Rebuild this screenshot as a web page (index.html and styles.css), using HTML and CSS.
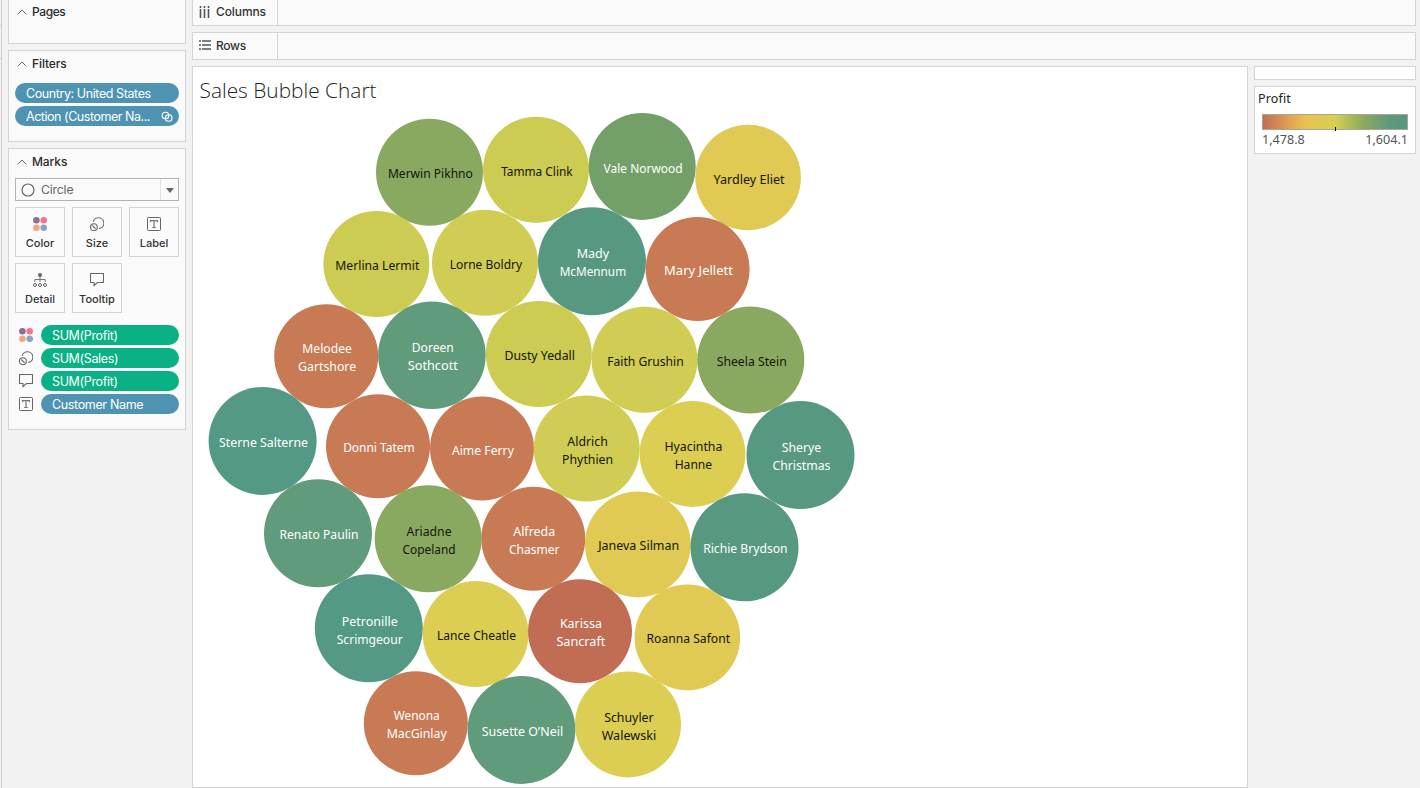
FILE: index.html
```html
<!DOCTYPE html>
<html lang="en">
<head>
<meta charset="utf-8">
<title>Sales Bubble Chart</title>
<link rel="stylesheet" href="styles.css">
</head>
<body>
<svg class="defs" width="0" height="0" aria-hidden="true">
  <symbol id="chev" viewBox="0 0 10 6"><path d="M.8 5.200 5 1l4.200 4.200" fill="none" stroke="#666" stroke-width="1"/></symbol>
  <symbol id="color" viewBox="0 0 14 14"><circle cx="3.400" cy="3.300" r="3.300" fill="#86729a"/><circle cx="10.800" cy="3.300" r="3.300" fill="#fb7185"/><circle cx="3.400" cy="10.700" r="3.300" fill="#f0a880"/><circle cx="10.800" cy="10.700" r="3.300" fill="#82a5ca"/></symbol>
  <symbol id="size" viewBox="0 0 14 14"><path d="M3.200 4.900A5.400 5.400 0 1 1 9 11.500" fill="none" stroke="#666" stroke-width="1.100"/><circle cx="3.900" cy="10.200" r="3.400" fill="none" stroke="#666" stroke-width="1.100"/><path d="m2.300 8.500 3.300 3.300" stroke="#666" stroke-width="1.100"/></symbol>
  <symbol id="label" viewBox="0 0 14 14"><rect x=".5" y=".5" width="13" height="13" rx=".8" fill="none" stroke="#666"/><path d="M3.500 5.300V3.600h7v1.700M7 3.600v7M5.200 10.500h3.600" fill="none" stroke="#777" stroke-width="1.200"/></symbol>
  <symbol id="tip" viewBox="0 0 14 14"><path d="M.5.500h13v9H7.500L4 12.500v-3H.5z" fill="none" stroke="#666" stroke-width="1.100"/></symbol>
  <symbol id="detail" viewBox="0 0 14 14"><circle cx="7" cy="2" r="2" fill="#666"/><path d="M7 3v6M1.800 9V6.500h10.400V9" fill="none" stroke="#777"/><g fill="#fafafa" stroke="#666"><circle cx="2" cy="12" r="1.500"/><circle cx="7" cy="12" r="1.500"/><circle cx="12" cy="12" r="1.500"/></g></symbol>
</svg>
<div class="workspace">
  <div class="gutter"><i></i><i></i></div>
  <aside class="sidebar">
    <section class="card pages"><h2><svg class="chev"><use href="#chev"/></svg><span>Pages</span></h2></section>
    <section class="card filters">
      <h2><svg class="chev"><use href="#chev"/></svg><span>Filters</span></h2>
      <div class="pills">
        <div class="pill blue"><span class="t-country">Country: United States</span></div>
        <div class="pill blue"><span class="t-action">Action (Customer Na...</span>
          <svg class="link" viewBox="0 0 12 12"><g fill="none" stroke="#fff" stroke-width="1.100"><circle cx="4.500" cy="4.500" r="3.300"/><circle cx="7.700" cy="7" r="3.300"/></g></svg></div>
      </div>
    </section>
    <section class="card marks">
      <h2><svg class="chev"><use href="#chev"/></svg><span>Marks</span></h2>
      <div class="select"><svg class="ring" viewBox="0 0 13 13"><circle cx="6.500" cy="6.500" r="5.600" fill="none" stroke="#666" stroke-width="1.100"/></svg><span>Circle</span><div class="arrow"><svg width="8" height="5" viewBox="0 0 8 5"><path d="M0 0h8L4 5z" fill="#666"/></svg></div></div>
      <div class="buttons">
        <div class="btn"><svg class="ico"><use href="#color"/></svg><span>Color</span></div>
        <div class="btn"><svg class="ico"><use href="#size"/></svg><span>Size</span></div>
        <div class="btn"><svg class="ico"><use href="#label"/></svg><span>Label</span></div>
        <div class="btn"><svg class="ico"><use href="#detail"/></svg><span>Detail</span></div>
        <div class="btn"><svg class="ico"><use href="#tip"/></svg><span>Tooltip</span></div>
      </div>
      <div class="fields">
        <div class="field"><svg class="ico"><use href="#color"/></svg><div class="pill green"><span>SUM(Profit)</span></div></div>
        <div class="field"><svg class="ico"><use href="#size"/></svg><div class="pill green"><span>SUM(Sales)</span></div></div>
        <div class="field"><svg class="ico"><use href="#tip"/></svg><div class="pill green"><span>SUM(Profit)</span></div></div>
        <div class="field"><svg class="ico"><use href="#label"/></svg><div class="pill blue"><span class="t-customer">Customer Name</span></div></div>
      </div>
    </section>
  </aside>
  <main class="main">
    <div class="shelf columns"><div class="shelf-name"><svg width="12" height="12" viewBox="0 0 12 12"><path d="M1.500 0v2M5.500 0v2M9.500 0v2M1.500 3v9M5.500 3v9M9.500 3v9" stroke="#555" stroke-width="1.600"/></svg><span>Columns</span></div></div>
    <div class="shelf rows"><div class="shelf-name"><svg width="12" height="12" viewBox="0 0 12 12"><path d="M0 2h2M0 6h2M0 10h2M3 2h9M3 6h9M3 10h9" stroke="#555" stroke-width="1.700"/></svg><span>Rows</span></div></div>
    <div class="view">
      <section class="sheet"><svg class="chart" id="chart" width="1054" height="720" viewBox="193 67 1054 720"><text class="title" x="199.500" y="98" textLength="177" lengthAdjust="spacingAndGlyphs">Sales Bubble Chart</text></svg></section>
      <aside class="legends">
        <div class="legend-empty"></div>
        <div class="legend">
          <h3>Profit</h3>
          <div class="ramp"><i></i></div>
          <div class="range"><span>1,478.8</span><span>1,604.1</span></div>
        </div>
      </aside>
    </div>
  </main>
</div>
<script src="chart.js"></script>
</body>
</html>
```
FILE: styles.css
```css
* { box-sizing: border-box; }
body { margin: 0; width: 1420px; height: 788px; overflow: hidden; background: #f2f2f2; font-family: Inter, "Liberation Sans", sans-serif; color: #333; }
.defs { display: block; height: 0; }
svg { flex: none; }
.workspace { display: flex; height: 788px; }
.gutter { width: 2px; border-right: 1px solid #d0d0d0; padding-top: 25px; display: flex; flex-direction: column; gap: 32px; }
.gutter i { height: 1px; background: #d0d0d0; }
.sidebar { width: 178px; margin-left: 6px; display: flex; flex-direction: column; gap: 6px; }
.card { background: #fafafa; border: 1px solid #d4d4d4; padding: 0 6px; }
.card h2 { margin: 0; height: 26px; display: flex; align-items: center; gap: 5px; padding: 0 0 2px 2px; font-size: 12px; letter-spacing: -.1px; font-weight: 500; color: #2b2b2b; }
.chev { width: 10px; height: 6px; margin-top: 1px; }
.card.pages { height: 44px; border-top: 0; }
.pages h2 { height: 24px; letter-spacing: -.4px; }
.filters { height: 92px; }
.marks { height: 282px; }
.pills { display: flex; flex-direction: column; gap: 3px; padding-top: 6px; }
.pill { height: 20px; border-radius: 10px; padding: 1px 6px 0 11px; display: flex; align-items: center; justify-content: space-between; color: #fff; font-size: 12.500px; letter-spacing: -.35px; white-space: nowrap; flex: 1; }
.pills .pill { flex: none; }
.blue { background: #4e94b2; }
.green { background: #09b184; }
.t-country, .t-action { letter-spacing: -.41px; }
.t-action { letter-spacing: -.46px; }
.link { width: 12px; height: 12px; }
.select { height: 23px; margin-top: 3px; border: 1px solid #b2b2b2; display: flex; align-items: center; padding-left: 5px; font-size: 12.300px; letter-spacing: -.2px; color: #666; background: #fafafa; }
.ring { width: 14px; height: 14px; margin-right: 6px; }
.arrow { margin-left: auto; width: 18px; height: 21px; border-left: 1px solid #e0e0e0; display: flex; align-items: center; justify-content: center; padding: 2px 0 0 1px; }
.buttons { display: grid; grid-template-columns: repeat(3, 50px); grid-auto-rows: 50px; gap: 6px 7px; margin-top: 6px; }
.btn { border: 1px solid #d4d4d4; display: flex; flex-direction: column; align-items: center; padding-top: 9px; gap: 5px; font-size: 11px; line-height: 14px; font-weight: 500; color: #333; background: #fbfbfb; }
.ico { width: 14px; height: 14px; }
.fields { display: flex; flex-direction: column; gap: 3px; margin-top: 12px; }
.field { display: flex; align-items: center; gap: 8px; padding-left: 4px; }
.main { margin-left: 6px; width: 1224px; display: flex; flex-direction: column; gap: 6px; }
.shelf { background: #fafafa; border: 1px solid #d4d4d4; }
.columns { height: 26px; border-top: 0; }
.rows { height: 28px; }
.shelf-name { width: 85px; height: 100%; border-right: 1px solid #d4d4d4; display: flex; align-items: center; gap: 5px; padding: 0 0 2px 6px; font-size: 12px; letter-spacing: -.1px; font-weight: 500; color: #333; }
.rows .shelf-name { letter-spacing: -.3px; }
.view { display: flex; gap: 6px; }
.sheet { width: 1056px; height: 722px; background: #fff; border: 1px solid #d4d4d4; }
.chart { display: block; font-family: "Noto Sans", "Open Sans", sans-serif; }
.title { font-family: "Open Sans", "Noto Sans", sans-serif; font-size: 20px; font-weight: 300; fill: #222; }
.label { font-size: 12.800px; text-anchor: middle; }
.legends { width: 162px; display: flex; flex-direction: column; gap: 6px; font-family: "Noto Sans", sans-serif; }
.legend-empty { height: 14px; background: #fff; border: 1px solid #d4d4d4; }
.legend { height: 68px; background: #fff; border: 1px solid #d4d4d4; padding: 3px 7px 0; }
.legend h3 { margin: 0 0 0 -4px; font-size: 12.500px; line-height: 18px; font-weight: 400; letter-spacing: .15px; color: #222; }
.ramp { height: 16px; margin-top: 6px; border: 1px solid #a9a793; background: linear-gradient(90deg, #c16d54 0%, #e4a653 20%, #ebc153 30%, #d5d052 50%, #8aa960 70%, #609979 87%, #549885 100%); display: flex; justify-content: center; align-items: flex-end; }
.ramp i { width: 1px; height: 4px; margin-bottom: -2px; background: #000; }
.range { display: flex; justify-content: space-between; font-size: 12.600px; line-height: 18px; margin-top: 1px; color: #555; }
```
FILE: chart.js
```js
// [cx, cy, r, fill, text colour, first baseline, [line, width], ...]
const K = "#14140a", W = "#fff";
const bubbles = [
  [429.5, 172.2, 53.5, "#8aa960", K, 178, ["Merwin Pikhno", 85]],
  [536, 169.8, 53, "#cccb52", K, 176, ["Tamma Clink", 71.5]],
  [642.2, 166.4, 53.5, "#73a069", W, 173, ["Vale Norwood", 79]],
  [748.1, 177.5, 52.8, "#e0ca53", K, 184, ["Yardley Eliet", 71]],
  [376.4, 264, 53, "#cccb52", K, 270, ["Merlina Lermit", 84]],
  [485, 262.7, 53, "#d1cd54", K, 269, ["Lorne Boldry", 72.5]],
  [592, 261.3, 54, "#579881", W, 258, ["Mady", 32.5], ["McMennum", 66.5]],
  [697.6, 268.9, 52, "#c87a54", W, 275, ["Mary Jellett", 69]],
  [326.2, 356.2, 52, "#c87a54", W, 353, ["Melodee", 49.5], ["Gartshore", 58]],
  [431.9, 355.2, 53.8, "#609b7b", W, 352, ["Doreen", 42], ["Sothcott", 50]],
  [538.8, 354, 53, "#cccb52", K, 360, ["Dusty Yedall", 70.5]],
  [644.6, 359.8, 53, "#d1cd54", K, 366, ["Faith Grushin", 76.5]],
  [750.8, 360, 53.5, "#8aa960", K, 366, ["Sheela Stein", 70]],
  [262.6, 440.9, 54, "#539985", W, 447, ["Sterne Salterne", 89]],
  [378, 446.2, 52, "#c87a54", W, 452, ["Donni Tatem", 71.5]],
  [482, 448.5, 52, "#c87a54", W, 455, ["Aime Ferry", 62]],
  [586.7, 448.5, 53, "#d1cd54", K, 446, ["Aldrich", 40.5], ["Phythien", 51]],
  [692.5, 454, 52.9, "#dcce52", K, 451, ["Hyacintha", 58], ["Hanne", 37.5]],
  [800.5, 455.1, 54, "#579881", W, 452, ["Sherye", 39.5], ["Christmas", 58]],
  [318, 533.3, 54, "#609b7b", W, 539, ["Renato Paulin", 79]],
  [428.2, 538.8, 53.5, "#8aa960", K, 536, ["Ariadne", 45], ["Copeland", 53]],
  [533.3, 538.8, 52, "#c87a54", W, 536, ["Alfreda", 42], ["Chasmer", 50.5]],
  [637.8, 544.3, 52.9, "#e0ca53", K, 550, ["Janeva Silman", 81]],
  [744.5, 547.3, 54, "#579881", W, 553, ["Richie Brydson", 84.5]],
  [368.8, 628.3, 54, "#539985", W, 626, ["Petronille", 56], ["Scrimgeour", 66]],
  [475.6, 634.1, 53, "#dcce52", K, 640, ["Lance Cheatle", 79]],
  [580, 631.3, 52, "#c16d54", W, 628, ["Karissa", 42], ["Sancraft", 49]],
  [687.4, 637.4, 52.8, "#e0ca53", K, 643, ["Roanna Safont", 83.5]],
  [415.8, 723.3, 52, "#c87a54", W, 720, ["Wenona", 46], ["MacGinlay", 60]],
  [521.5, 730, 53.9, "#609b7b", W, 736, ["Susette O’Neil", 81.5]],
  [628, 724.4, 53, "#dcce52", K, 722, ["Schuyler", 49.5], ["Walewski", 54.5]]
];
const chart = document.getElementById("chart");
function add(tag, attrs, text) {
  const el = document.createElementNS("http://www.w3.org/2000/svg", tag);
  for (const k in attrs) el.setAttribute(k, attrs[k]);
  if (text) el.textContent = text;
  chart.appendChild(el);
}
for (const [cx, cy, r, fill, ink, y, ...lines] of bubbles) {
  add("circle", { cx, cy, r, fill });
  lines.forEach(([text, w], i) => add("text", {
    class: "label", x: cx + 0.9, y: y + i * 18, fill: ink,
    textLength: w, lengthAdjust: "spacingAndGlyphs"
  }, text));
}
```
